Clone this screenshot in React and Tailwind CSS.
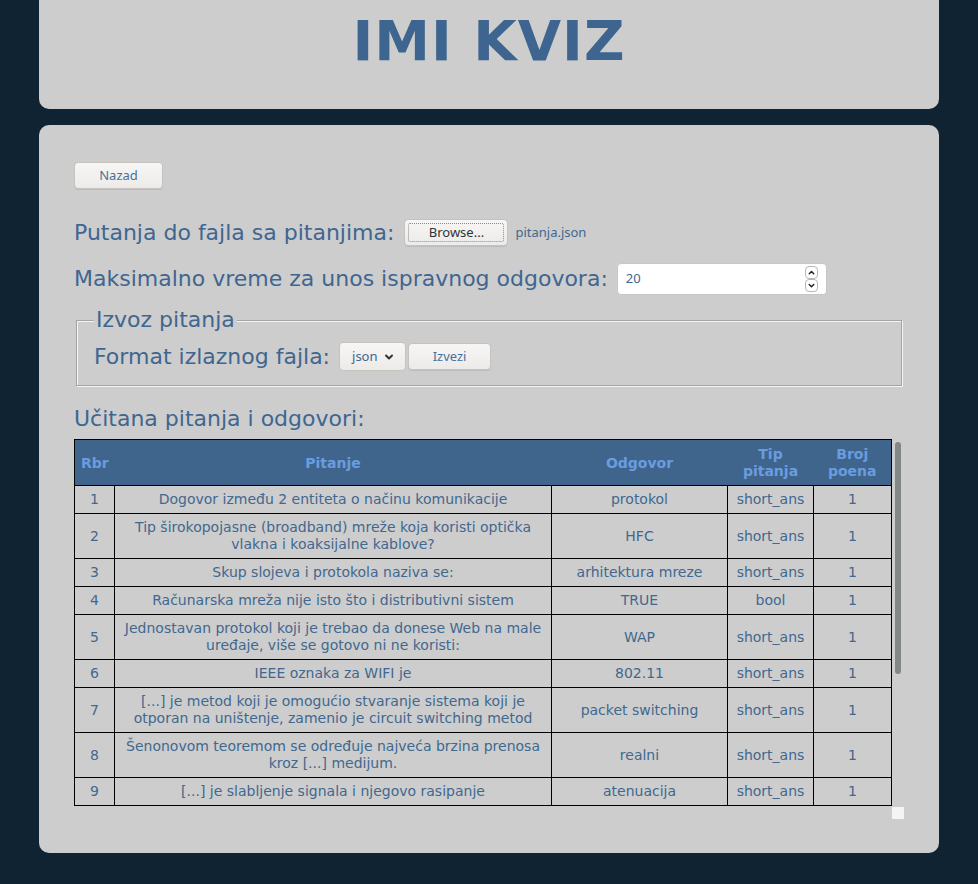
import React from 'react';

const questions = [
  { id: 1, q: 'Dogovor između 2 entiteta o načinu komunikacije', a: 'protokol', type: 'short_ans', pts: 1 },
  { id: 2, q: 'Tip širokopojasne (broadband) mreže koja koristi optička vlakna i koaksijalne kablove?', a: 'HFC', type: 'short_ans', pts: 1 },
  { id: 3, q: 'Skup slojeva i protokola naziva se:', a: 'arhitektura mreze', type: 'short_ans', pts: 1 },
  { id: 4, q: 'Računarska mreža nije isto što i distributivni sistem', a: 'TRUE', type: 'bool', pts: 1 },
  { id: 5, q: 'Jednostavan protokol koji je trebao da donese Web na male uređaje, više se gotovo ni ne koristi:', a: 'WAP', type: 'short_ans', pts: 1 },
  { id: 6, q: 'IEEE oznaka za WIFI je', a: '802.11', type: 'short_ans', pts: 1 },
  { id: 7, q: '[...] je metod koji je omogućio stvaranje sistema koji je otporan na uništenje, zamenio je circuit switching metod', a: 'packet switching', type: 'short_ans', pts: 1 },
  { id: 8, q: 'Šenonovom teoremom se određuje najveća brzina prenosa kroz [...] medijum.', a: 'realni', type: 'short_ans', pts: 1 },
  { id: 9, q: '[...] je slabljenje signala i njegovo rasipanje', a: 'atenuacija', type: 'short_ans', pts: 1 },
];

function Chevron({ up, className }) {
  return (
    <svg viewBox="0 0 10 10" className={className} fill="none" stroke="currentColor" strokeWidth="1.6" strokeLinecap="round" strokeLinejoin="round">
      {up ? <path d="M2.5 6.5 L5 4 L7.5 6.5" /> : <path d="M2.5 4 L5 6.5 L7.5 4" />}
    </svg>
  );
}

function Button({ children, className = '', focused = false }) {
  return (
    <button className={`relative h-[27px] rounded-[4px] border border-[#c6c3bf] bg-gradient-to-b from-[#f7f6f5] to-[#ecebe9] text-[13px] font-['Noto_Sans',sans-serif] shadow-[0_1px_0_rgba(0,0,0,0.08)] ${className}`}>
      {focused && <span className="absolute inset-[3px] rounded-[2px] border border-dotted border-[#8a8a8a]" />}
      {children}
    </button>
  );
}

export default function App() {
  return (
    <div className="min-h-screen bg-[#0f2333] px-[39px] pb-[31px] font-['DejaVu_Sans',sans-serif] text-[#3f6690]">
      {/* Header card */}
      <div className="h-[109px] rounded-b-[10px] bg-[#cdcdcd] pt-[13px] text-center">
        <h1 className="text-[56px] font-bold leading-[56px] tracking-[1px] text-[#3e658f]">IMI KVIZ</h1>
      </div>

      {/* Main card */}
      <div className="mt-[16px] rounded-[10px] bg-[#cdcdcd] px-[35px] pt-[37px] pb-[34px]">
        <Button className="w-[89px] text-[#4a6f99]">Nazad</Button>

        <div className="mt-[30px] flex h-[27px] items-center">
          <span className="text-[22px] leading-[26px]">Putanja do fajla sa pitanjima:</span>
          <Button focused className="ml-[10px] w-[104px] text-[#2e3436]">Browse...</Button>
          <span className="ml-[7px] font-['Noto_Sans',sans-serif] text-[13px] text-[#41688f]">pitanja.json</span>
        </div>

        <div className="mt-[17px] flex h-[32px] items-center">
          <span className="text-[22px] leading-[26px]">Maksimalno vreme za unos ispravnog odgovora:</span>
          <div className="ml-[9px] flex h-[32px] w-[210px] items-center rounded-[4px] border border-[#c9c7c4] bg-white pl-[8px] pr-[8px]">
            <span className="flex-1 font-['Noto_Sans',sans-serif] text-[13px] text-[#41688f]">20</span>
            <div className="flex flex-col">
              <span className="flex h-[13px] w-[13px] items-center justify-center rounded-[4px] border border-[#b9b7b4] text-[#222]">
                <Chevron up className="h-[9px] w-[9px]" />
              </span>
              <span className="flex h-[13px] w-[13px] items-center justify-center rounded-[4px] border border-[#b9b7b4] text-[#222]">
                <Chevron className="h-[9px] w-[9px]" />
              </span>
            </div>
          </div>
        </div>

        <fieldset className="mx-[2px] mt-[12px] border border-[#a4a4a4] px-[17px] pb-[14px] shadow-[inset_1px_1px_0_#f4f4f4,1px_1px_0_#f4f4f4]">
          <legend className="bg-[#cdcdcd] px-[2px] text-[22px] leading-[26px]">Izvoz pitanja</legend>
          <div className="mt-[9px] flex h-[29px] items-center">
            <span className="text-[22px] leading-[26px]">Format izlaznog fajla:</span>
            <div className="ml-[9px] flex h-[29px] w-[67px] items-center rounded-[4px] border border-[#c6c3bf] bg-gradient-to-b from-[#f7f6f5] to-[#ecebe9] pl-[12px] font-['Noto_Sans',sans-serif] text-[13px] text-[#41688f]">
              <span>json</span>
              <svg viewBox="0 0 10 10" className="ml-[6px] h-[10px] w-[10px] text-[#2e3436]" fill="none" stroke="currentColor" strokeWidth="2" strokeLinecap="round" strokeLinejoin="round">
                <path d="M2 3.5 L5 6.5 L8 3.5" />
              </svg>
            </div>
            <Button className="ml-[2px] w-[83px] text-[#4a6f99]">Izvezi</Button>
          </div>
        </fieldset>

        <h2 className="mt-[20px] text-[22px] leading-[26px]">Učitana pitanja i odgovori:</h2>

        <div className="mt-[7px] flex h-[380px]">
          <div className="w-[818px]">
            <div className="h-[368px] overflow-hidden">
              <table className="w-[817px] table-fixed border-collapse border border-black text-[14px] leading-[17px] text-[#41688f]">
                <colgroup>
                  <col className="w-[40px]" />
                  <col className="w-[437px]" />
                  <col className="w-[176px]" />
                  <col className="w-[86px]" />
                  <col className="w-[78px]" />
                </colgroup>
                <thead>
                  <tr className="bg-[#3f658c] font-bold text-[#6a9ce0]">
                    <th className="border-y border-black pt-[6px] pb-[5px]">Rbr</th>
                    <th className="border-y border-black pt-[6px] pb-[5px]">Pitanje</th>
                    <th className="border-y border-black pt-[6px] pb-[5px]">Odgovor</th>
                    <th className="border-y border-black pt-[6px] pb-[5px]">Tip<br />pitanja</th>
                    <th className="border-y border-black pt-[6px] pb-[5px]">Broj<br />poena</th>
                  </tr>
                </thead>
                <tbody>
                  {questions.map((row) => (
                    <tr key={row.id} className="text-center">
                      <td className="border border-black px-[4px] py-[5px]">{row.id}</td>
                      <td className="border border-black px-[6px] py-[5px]">{row.q}</td>
                      <td className="border border-black px-[4px] py-[5px]">{row.a}</td>
                      <td className="border border-black px-[4px] py-[5px]">{row.type}</td>
                      <td className="border border-black px-[4px] py-[5px]">{row.pts}</td>
                    </tr>
                  ))}
                </tbody>
              </table>
            </div>
          </div>
          {/* fake scrollbar */}
          <div className="flex w-[12px] flex-col">
            <div className="flex-1 pt-[3px] pl-[3px]">
              <div className="h-[232px] w-[6px] rounded-full bg-[#848787]" />
            </div>
            <div className="h-[12px] bg-[#f4f4f4]" />
          </div>
        </div>
      </div>
    </div>
  );
}
